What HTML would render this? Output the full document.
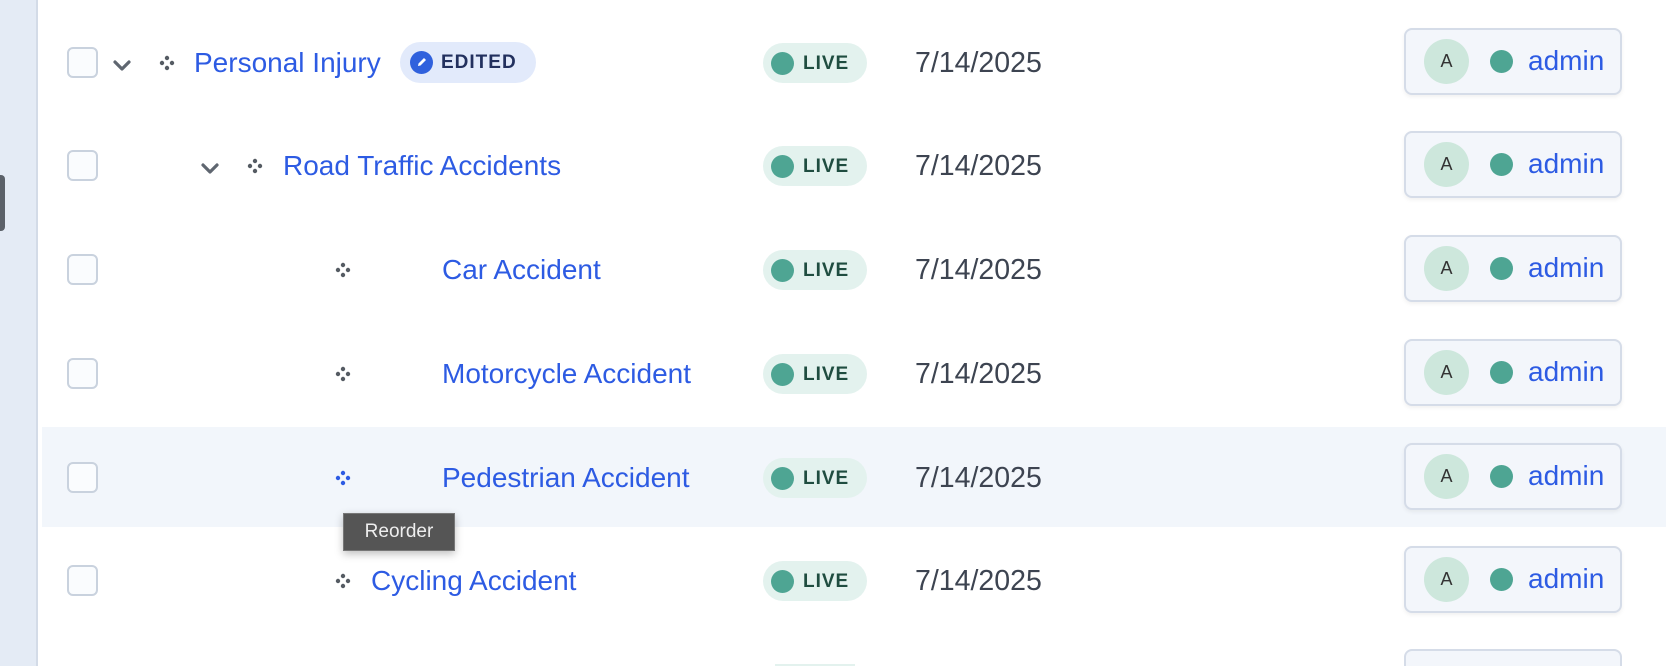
<!DOCTYPE html>
<html><head><style>
*{margin:0;padding:0;box-sizing:border-box}
html,body{width:1666px;height:666px;overflow:hidden}
body{background:#fff;font-family:"Liberation Sans",sans-serif;position:relative}
.side{position:absolute;left:0;top:0;width:38px;height:666px;background:#e4ebf5;border-right:2px solid #d3dbe7}
.tab{position:absolute;left:0;top:175px;width:5px;height:56px;background:#5b6169;border-radius:0 4px 4px 0}
.hl{position:absolute;left:42px;top:427px;width:1624px;height:100px;background:#f2f6fb}
.row{position:absolute;left:0;width:1666px;height:0}
.cb{position:absolute;left:67px;top:-16px;width:31px;height:31px;border:2px solid #c9d2de;border-radius:6px;background:#fafcfe}
.chev{position:absolute;top:-7px}
.dots{position:absolute;top:-8px}
.t{position:absolute;top:-16px;font-size:28px;color:#2d5be3;white-space:nowrap}
.live{position:absolute;left:763px;top:-20px;width:104px;height:40px;background:#e3f2ee;border-radius:20px}
.live i{position:absolute;left:8px;top:9px;width:23px;height:23px;border-radius:50%;background:#4ea593}
.live b{position:absolute;left:40px;top:10px;font-size:19px;font-weight:bold;color:#1f4d40;letter-spacing:1px}
.date{position:absolute;left:915px;top:-16px;font-size:28.5px;color:#3d4451}
.adm{position:absolute;left:1404px;top:-35px;width:218px;height:67px;border:2px solid #d5dce8;border-radius:8px;background:#f3f6fb;box-shadow:0 2px 4px rgba(0,0,0,.06)}
.av{position:absolute;left:18px;top:9px;width:45px;height:45px;border-radius:50%;background:#cde7dc;color:#333;font-size:18px;text-align:center;line-height:45px}
.gd{position:absolute;left:84px;top:20px;width:23px;height:23px;border-radius:50%;background:#4ea593}
.an{position:absolute;left:122px;top:15px;font-size:28px;color:#2d5be3}
.ed{position:absolute;left:400px;top:-21px;width:136px;height:41px;border-radius:21px;background:#e2eafb}
.ed i{position:absolute;left:10px;top:9px;width:23px;height:23px;border-radius:50%;background:#3061dd}
.ed b{position:absolute;left:41px;top:10px;font-size:19px;font-weight:bold;color:#22305e;letter-spacing:1px}
.tip{position:absolute;left:343px;top:513px;width:112px;height:38px;background:#555;border:1px solid #777;color:#eee;font-size:19px;line-height:36px;text-align:center;box-shadow:0 3px 8px rgba(0,0,0,.25)}
</style></head><body>
<div class="side"></div><div class="tab"></div>
<div class="hl"></div>

<svg width="0" height="0" style="position:absolute"><defs>
<g id="d"><circle cx="8" cy="3" r="2.2"/><circle cx="3" cy="8" r="2.2"/><circle cx="13" cy="8" r="2.2"/><circle cx="8" cy="13" r="2.2"/></g>
<path id="c" d="M3 6 L10 13 L17 6" fill="none" stroke="#5f6670" stroke-width="3.2" stroke-linecap="round" stroke-linejoin="round"/>
</defs></svg>

<div class="row" style="top:63px">
<div class="cb"></div>
<svg class="chev" style="left:112px" width="20" height="18"><use href="#c"/></svg>
<svg class="dots" style="left:159px" width="16" height="16" fill="#555b63"><use href="#d"/></svg>
<div class="t" style="left:194px">Personal Injury</div>
<div class="ed"><i><svg width="23" height="23"><path d="M8 15 L8.5 12.5 L14 7 L16 9 L10.5 14.5 Z" fill="#fff"/></svg></i><b>EDITED</b></div>
<div class="live"><i></i><b>LIVE</b></div><div class="date">7/14/2025</div>
<div class="adm"><div class="av">A</div><div class="gd"></div><div class="an">admin</div></div>
</div>

<div class="row" style="top:166px">
<div class="cb"></div>
<svg class="chev" style="left:200px" width="20" height="18"><use href="#c"/></svg>
<svg class="dots" style="left:247px" width="16" height="16" fill="#555b63"><use href="#d"/></svg>
<div class="t" style="left:283px">Road Traffic Accidents</div>
<div class="live"><i></i><b>LIVE</b></div><div class="date">7/14/2025</div>
<div class="adm"><div class="av">A</div><div class="gd"></div><div class="an">admin</div></div>
</div>

<div class="row" style="top:270px">
<div class="cb"></div>
<svg class="dots" style="left:335px" width="16" height="16" fill="#555b63"><use href="#d"/></svg>
<div class="t" style="left:442px">Car Accident</div>
<div class="live"><i></i><b>LIVE</b></div><div class="date">7/14/2025</div>
<div class="adm"><div class="av">A</div><div class="gd"></div><div class="an">admin</div></div>
</div>

<div class="row" style="top:374px">
<div class="cb"></div>
<svg class="dots" style="left:335px" width="16" height="16" fill="#555b63"><use href="#d"/></svg>
<div class="t" style="left:442px">Motorcycle Accident</div>
<div class="live"><i></i><b>LIVE</b></div><div class="date">7/14/2025</div>
<div class="adm"><div class="av">A</div><div class="gd"></div><div class="an">admin</div></div>
</div>

<div class="row" style="top:478px">
<div class="cb"></div>
<svg class="dots" style="left:335px" width="16" height="16" fill="#2d5be3"><use href="#d"/></svg>
<div class="t" style="left:442px">Pedestrian Accident</div>
<div class="live"><i></i><b>LIVE</b></div><div class="date">7/14/2025</div>
<div class="adm"><div class="av">A</div><div class="gd"></div><div class="an">admin</div></div>
</div>

<div class="row" style="top:581px">
<div class="cb"></div>
<svg class="dots" style="left:335px" width="16" height="16" fill="#555b63"><use href="#d"/></svg>
<div class="t" style="left:371px">Cycling Accident</div>
<div class="live"><i></i><b>LIVE</b></div><div class="date">7/14/2025</div>
<div class="adm"><div class="av">A</div><div class="gd"></div><div class="an">admin</div></div>
</div>

<div style="position:absolute;left:1404px;top:649px;width:218px;height:17px;border:2px solid #d5dce8;border-bottom:none;border-radius:8px 8px 0 0;background:#f3f6fb"></div>
<div style="position:absolute;left:775px;top:664px;width:80px;height:2px;background:#e3f2ee"></div>

<div class="tip">Reorder</div>
</body></html>
